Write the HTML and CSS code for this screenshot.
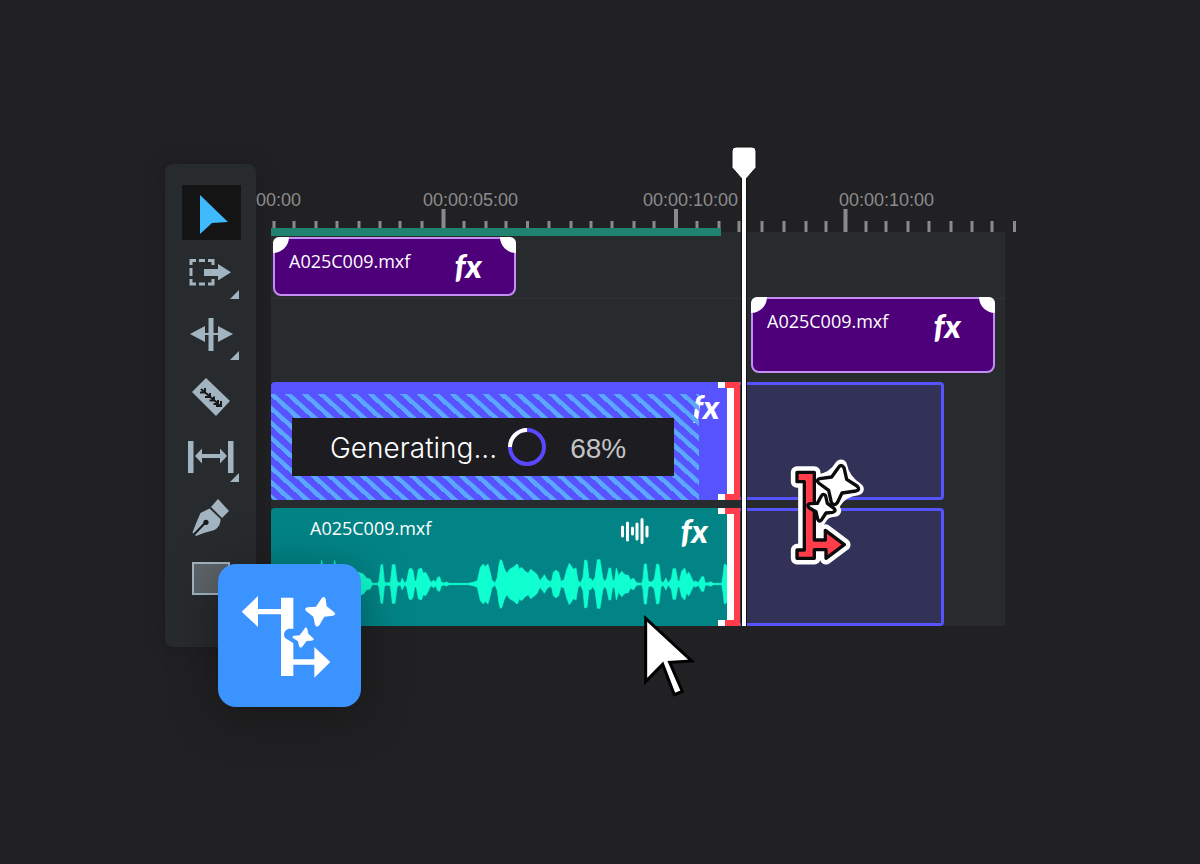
FILE: index.html
```html
<!DOCTYPE html>
<html lang="en">
<head>
    <meta charset="UTF-8" />
    <meta name="viewport" content="width=device-width, initial-scale=1.0" />
    <title>Generative Extend</title>
    <link rel="stylesheet" href="styles.css">
</head>
<body>
<main class="editor">
    <div class="toolbar">
        <button class="tool active" type="button" aria-label="Selection">
            <svg viewBox="0 0 59 55"><path class="pointer" d="M18 10L46 37L30 38L18 49Z"/></svg>
        </button>
        <button class="tool" type="button" aria-label="Track select forward">
            <svg viewBox="0 0 59 61">
                <path class="line" d="M9 23V18.500H14M17 18.500H23M26 18.500H31V23M9 26V34M9 37V42H14M17 42H23M26 42H31V37"/>
                <path class="cut" d="M22 27H36V22L49 30.300L36 38.500V34H22Z"/>
                <path class="more" d="M57 48V57H48Z"/>
            </svg>
        </button>
        <button class="tool" type="button" aria-label="Ripple edit">
            <svg viewBox="0 0 59 61">
                <path d="M8 31L23 23V30H36V23L51 31L36 39V32H23V39Z"/>
                <path d="M26.500 15H31.500V48H26.500Z"/>
                <path class="more" d="M57 48V57H48Z"/>
            </svg>
        </button>
        <button class="tool" type="button" aria-label="Razor">
            <svg viewBox="0 0 59 61">
                <path d="M24 14L48 37L34 52L10 28Z"/>
                <path class="slot" d="M19 25L39 42M23 24V28.500H18M28 29V33H23M32 32.500V36.500H27.500M36 36V40H31.500M39 37V42H34"/>
            </svg>
        </button>
        <button class="tool" type="button" aria-label="Slip">
            <svg viewBox="0 0 59 61">
                <path d="M6 16H11.500V48H6ZM46 16H51.500V48H46Z"/>
                <path d="M13 31L20 23.500V29H38V23.500L45 31L38 38.500V33H20V38.500Z"/>
                <path class="more" d="M57 48V57H48Z"/>
            </svg>
        </button>
        <button class="tool" type="button" aria-label="Pen">
            <svg viewBox="0 0 59 61">
                <path d="M36 13L47 25L40 32L29 21Z"/>
                <path d="M27.500 22.500L38.500 33Q39 40 32.500 44Q24 46 14 50L10.500 46.500Q14 37 18.500 27Z"/>
                <path class="slit" d="M12 48.500L23 37"/>
                <circle class="hole" cx="24" cy="36.300" r="2.600"/>
            </svg>
        </button>
        <button class="tool" type="button" aria-label="Rectangle">
            <svg viewBox="0 0 59 61"><path class="box" d="M11 16H47V47H11Z"/></svg>
        </button>
    </div>

    <section class="timeline">
        <div class="ruler">
            <div class="times">
                <span>00:00</span>
                <span>00:00:05:00</span>
                <span>00:00:10:00</span>
                <span>00:00:10:00</span>
            </div>
            <svg class="ticks" viewBox="0 0 760 23" preserveAspectRatio="none">
                <path d="M18 12V23M38 12V23M60 12V23M81 12V23M103 12V23M124 12V23M144 12V23M166 12V23M208 12V23M230 12V23M250 12V23M271.500 12V23M293 12V23M315 12V23M335 12V23M356 12V23M378 12V23M398 12V23M441 12V23M463 12V23M483 12V23M506 12V23M528 12V23M550 12V23M570 12V23M610 12V23M630 12V23M652 12V23M673 12V23M695 12V23M716 12V23M736 12V23M758.500 12V23"/>
                <path class="major" d="M187.500 0V23M420 0V23M589.500 0V23"/>
            </svg>
        </div>

        <div class="tracks">
            <div class="render-bar"></div>
            <div class="track track-v3">
                <div class="clip title-clip">
                    <span class="name">A025C009.mxf</span>
                    <span class="fx">fx</span>
                </div>
            </div>
            <div class="track track-v2">
                <div class="clip title-clip">
                    <span class="name">A025C009.mxf</span>
                    <span class="fx">fx</span>
                </div>
            </div>
            <div class="track track-v1">
                <div class="clip video-clip">
                    <div class="stripes">
                        <div class="progress" role="status">
                            <span class="label">Generating...</span>
                            <svg class="ring" viewBox="0 0 38 38">
                                <circle cx="19" cy="19" r="17"/>
                                <path d="M2 19A17 17 0 0 1 19 2"/>
                            </svg>
                            <span class="percent">68%</span>
                        </div>
                    </div>
                    <span class="fx">fx</span>
                    <svg class="bracket" viewBox="0 0 22 118" preserveAspectRatio="none">
                        <path class="inner" d="M0 0H8V6H16V112H8V118H0V112H9V6H0Z"/>
                        <path class="outer" d="M7 0H22V118H7V112H16V6H7Z"/>
                    </svg>
                </div>
                <div class="extension"></div>
            </div>
            <div class="track track-a1">
                <div class="clip audio-clip">
                    <div class="audio-body">
                        <div class="audio-head">
                            <span class="name">A025C009.mxf</span>
                            <svg class="audio-icon" viewBox="0 0 28 26"><path d="M1.500 9V18M6.500 5V22M11.500 10V16M16 6V21M21 1.500V24.500M26 9V18"/></svg>
                            <span class="fx">fx</span>
                        </div>
                        <svg class="wave" viewBox="0 0 1371 150" preserveAspectRatio="none"><path id="wave"/></svg>
                    </div>
                    <svg class="bracket" viewBox="0 0 22 118" preserveAspectRatio="none">
                        <path class="inner" d="M0 0H8V6H16V112H8V118H0V112H9V6H0Z"/>
                        <path class="outer" d="M7 0H22V118H7V112H16V6H7Z"/>
                    </svg>
                </div>
                <div class="extension"></div>
            </div>
        </div>

        <div class="playhead">
            <svg viewBox="0 0 28 34"><path d="M6 1H22Q26 1 26 5V21.500L16 33H12L2 21.500V5Q2 1 6 1Z"/></svg>
            <div class="playhead-line"></div>
        </div>

        <!-- extend tool, shown while dragging -->
        <svg class="extend-cursor" viewBox="0 0 330 375">
            <g class="halo">
                <path d="M81 67H133V270H166V241L223 284L168 325V299H133V325H81V300H103V95H81Z"/>
                <path d="M213 47Q220 88 263 117Q214 122 192 162Q183 116 143 92Q190 87 213 47Z"/>
                <path d="M160 135Q167 165 195 182Q162 182 148 212Q143 182 115 168Q149 165 160 135Z"/>
            </g>
            <path class="stem" d="M81 67H133V270H166V241L223 284L168 325V299H133V325H81V300H103V95H81Z"/>
            <path class="spark" d="M205 53Q213 40 222 53L230 88L261 108Q272 119 258 123L216 129L202 158Q192 170 184 157L176 121L146 99Q137 89 150 86L185 81Z"/>
            <path class="spark" d="M154 138Q160 128 167 138L172 160L192 175Q200 184 188 187L168 189L155 209Q148 219 143 207L138 185L118 174Q108 165 120 161L142 160Z"/>
        </svg>

        <svg class="cursor" viewBox="0 0 300 330">
            <path d="M77 55L215 183L149 187L187 274L163 284L128 193L77 245Z"/>
        </svg>
    </section>

    <div class="badge">
        <svg viewBox="54 42 429 429">
            <path d="M125 185L174 138V177H243V143H280V328H343V291L391 336L343 383V344H280V378H243V193H174V231Z"/>
            <path class="gap" d="M285 236H266Q252 240 252 254Q252 264 264 269L290 286Z"/>
            <path d="M313 237Q318 226 322 237L325 251L339 264Q346 270 334 272L320 273L308 289Q302 298 297 288L294 274L280 265Q273 259 283 257L299 256Z"/>
            <path d="M365 145Q373 136 377 147L380 169L402 186Q410 194 399 197L373 200L358 226Q350 235 345 224L340 200L318 183Q311 174 323 172L348 170Z"/>
        </svg>
    </div>
</main>

<script>
    // half heights of the waveform, as x, height pairs
    const parts = [
        { offset: -18, peaks: [
            18,2, 60,3, 90,20, 110,8, 140,6, 160,10, 170,71, 180,20, 200,15, 209,71, 218,20, 240,40, 262,24,
            280,35, 295,30, 305,17, 315,15, 322,2, 338,2, 342,10, 348,58, 353,58, 358,10, 362,3, 376,5, 382,58, 390,58,
            396,10, 402,3, 407,5, 412,18, 418,3, 425,8, 432,44, 438,48, 444,40, 449,8, 454,10, 460,44, 469,48,
            475,32, 482,35, 488,25, 495,10, 500,5, 505,12, 512,5, 518,20, 524,22, 528,7, 535,3, 545,6, 552,2,
            610,2, 625,5, 637,10, 646,50, 655,60, 660,52, 669,60, 677,30, 681,10, 685,8, 690,3, 697,20
        ] },
        { offset: 657, peaks: [
            27,58, 31,73, 36,70, 42,48, 50,32, 60,45, 70,50, 76,56, 82,60, 88,45, 95,50, 105,38, 115,32, 122,44,
            130,38, 140,30, 150,10, 158,20, 163,28, 170,15, 178,8, 185,10, 190,35, 198,42, 206,35, 213,8, 222,12,
            230,42, 238,62, 243,55, 250,44, 258,48, 264,10, 272,4, 279,20, 284,72, 291,70, 297,15, 301,18, 308,8, 315,20,
            322,73, 330,73, 338,20, 342,8, 350,15, 357,48, 362,48, 368,10, 374,12, 379,48, 386,25, 395,38, 405,28,
            415,26, 422,12, 430,18, 440,4, 455,2, 459,15, 463,60, 469,60, 475,8, 485,6, 493,15, 500,60, 507,58,
            513,8, 520,4, 528,18, 534,3, 544,15, 549,46, 557,46, 563,10, 568,8, 575,38, 584,48, 590,28, 597,35,
            606,15, 612,5, 618,10, 624,3, 630,12, 635,22, 641,22, 646,3, 655,4, 662,7, 670,2, 695,2, 699,25,
            703,60, 710,56, 714,30
        ] }
    ];
    const upper = [];
    const lower = [];
    parts.forEach(({ offset, peaks }) => {
        for (let i = 0; i < peaks.length; i += 2) {
            const x = peaks[i] + offset;
            upper.push(`${x} ${75 - peaks[i + 1]}`);
            lower.unshift(`${x} ${75 + peaks[i + 1]}`);
        }
    });
    document.getElementById('wave').setAttribute('d', `M${upper.concat(lower).join('L')}Z`);
</script>
</body>
</html>
```

FILE: styles.css
```css
:root {
    --page: #212123;
    --panel: #282b2e;
    --icon: #a3b4c1;
    --violet: #5753ff;
    --teal: #028486;
    --red: #ff3d4b;
}

* {
    box-sizing: border-box;
    margin: 0;
    padding: 0;
}

body {
    min-height: 100vh;
    background: var(--page);
    color: white;
    font-family: "Open Sans", "Noto Sans", sans-serif;
}

svg {
    display: block;
}

.editor {
    position: relative;
    display: flex;
    align-items: flex-start;
    padding: 164px 184px 40px 165px;
}

/* toolbar */

.toolbar {
    display: flex;
    flex-direction: column;
    align-items: center;
    width: 91px;
    flex: none;
    padding: 21px 15px 39px 17px;
    background: var(--panel);
    border-radius: 8px;
    box-shadow: 0 0 24px rgba(0, 0, 0, 0.15);
}

.tool {
    width: 59px;
    height: 61px;
    border: none;
    background: none;
    cursor: pointer;
}

.tool.active {
    height: 55px;
    margin-bottom: 2px;
    background: #141414;
}

.tool svg {
    width: 100%;
    height: 100%;
    fill: var(--icon);
}

.tool .pointer {
    fill: #3fbbfd;
}

.tool .line {
    fill: none;
    stroke: var(--icon);
    stroke-width: 3;
}

.tool .cut {
    stroke: var(--panel);
    stroke-width: 2;
    paint-order: stroke;
}

.tool .slot,
.tool .slit {
    fill: none;
    stroke: #17191b;
    stroke-width: 2;
}

.tool .hole {
    fill: #17191b;
}

.tool .box {
    fill: #5d6468;
    stroke: var(--icon);
    stroke-width: 2;
}

/* timeline */

.timeline {
    position: relative;
    flex: 1;
    min-width: 0;
}

.ruler {
    height: 68px;
    padding-top: 26px;
}

.times {
    display: grid;
    grid-template-columns: 167fr 220fr 196fr 177fr;
    height: 19px;
    font-family: "Liberation Sans", Arial, sans-serif;
    font-size: 18px;
    line-height: 20px;
    color: #8b8b8d;
}

.ticks {
    width: 100%;
    height: 23px;
    stroke: #8a8a8c;
    stroke-width: 3;
}

.ticks .major {
    stroke-width: 4;
}

.tracks {
    display: flow-root;
    margin: 0 11px 0 15px;
    background: var(--panel);
}

.render-bar {
    position: relative;
    width: 61.300%;
    height: 8px;
    margin-top: -4px;
    background: #1f836f;
}

.track {
    display: grid;
}

.track-v3 {
    grid-template-columns: 2fr 243fr 489fr;
    height: 62px;
    margin-top: 1px;
    padding-bottom: 2px;
    border-bottom: 1px solid #303437;
}

.track-v3 .clip,
.track-v2 .clip {
    grid-column: 2;
}

.track-v2 {
    grid-template-columns: 480fr 244fr 10fr;
    height: 76px;
    margin-top: -2px;
    margin-bottom: 9px;
}

.track-v1,
.track-a1 {
    grid-template-columns: 469fr 204fr 61fr;
    height: 118px;
}

.track-v1 {
    margin-bottom: 8px;
}

.clip {
    display: flex;
    min-width: 0;
}

.name {
    font-size: 18px;
    line-height: 24px;
}

.fx {
    font-family: Lato, sans-serif;
    font-size: 33px;
    font-weight: 900;
    font-style: italic;
    line-height: 32px;
}

.title-clip {
    position: relative;
    justify-content: space-between;
    align-items: flex-start;
    padding: 10px 32px 0 14px;
    background: #4e007b;
    border: 2px solid #c48ff5;
    border-radius: 8px;
}

/* trim handles in the corners */
.title-clip::before,
.title-clip::after {
    content: '';
    position: absolute;
    top: -2px;
    width: 16px;
    height: 16px;
    background: white;
}

.title-clip::before {
    left: -2px;
    border-radius: 6px 0 16px 0;
}

.title-clip::after {
    right: -2px;
    border-radius: 0 6px 0 16px;
}

.video-clip {
    background: var(--violet);
    border-radius: 4px 0 0 4px;
}

.video-clip .fx {
    width: 26px;
    margin: 8px 0 0 -7px;
}

.stripes {
    position: relative;
    z-index: 1;
    flex: 1;
    margin-top: 12px;
    padding: 24px 25px 24px 21px;
    background: repeating-linear-gradient(42deg, #5aa7fb 0 4px, transparent 5px 11px);
    border-radius: 0 0 0 4px;
}

.progress {
    display: flex;
    align-items: center;
    height: 58px;
    padding-left: 38px;
    background: #1d1c21;
}

.label {
    padding-top: 2px;
    font-family: Inter, sans-serif;
    font-size: 28px;
    font-weight: 300;
}

.ring {
    width: 38px;
    height: 38px;
    margin: 0 24px 0 11px;
    fill: none;
    stroke: #5a48ff;
    stroke-width: 4;
}

.ring path {
    stroke: white;
}

.percent {
    padding-top: 4px;
    font-family: "Liberation Sans", Arial, sans-serif;
    font-size: 28px;
    color: #c4c4c6;
}

.bracket {
    flex: none;
    width: 22px;
    height: 118px;
}

.bracket .inner {
    fill: white;
}

.bracket .outer {
    fill: var(--red);
}

.extension {
    background: #323158;
    border: 3px solid var(--violet);
    border-left: none;
    border-radius: 0 4px 4px 0;
}

.audio-clip {
    background: var(--teal);
    border-radius: 4px 0 0 4px;
}

.audio-clip .bracket {
    margin-left: -10px;
}

.audio-body {
    flex: 1;
    min-width: 0;
}

.audio-head {
    display: flex;
    align-items: flex-start;
    height: 51px;
    padding: 8px 20px 0 39px;
}

.audio-head .fx {
    line-height: 28px;
}

.audio-icon {
    width: 28px;
    height: 26px;
    margin: 2px 32px 0 auto;
    fill: none;
    stroke: white;
    stroke-width: 3;
    stroke-linecap: round;
}

.wave {
    width: 100%;
    height: 50px;
    fill: #0fffd0;
    stroke: #0fffd0;
    stroke-width: 2;
    stroke-linejoin: round;
}

/* things that float above the tracks */

.playhead {
    position: absolute;
    top: -18px;
    bottom: 0;
    left: 64.200%;
    z-index: 3;
    display: flex;
    flex-direction: column;
    align-items: center;
    width: 28px;
    margin-left: -14px;
}

.playhead svg {
    width: 28px;
    height: 34px;
    fill: white;
    stroke: #131314;
    stroke-width: 1;
}

.playhead-line {
    flex: 1;
    width: 6px;
    margin-top: -2px;
    background: white;
    border: solid #131314;
    border-width: 0 1px;
}

.extend-cursor {
    position: absolute;
    top: 286px;
    left: 67.600%;
    z-index: 4;
    width: 110px;
    height: 125px;
    stroke: #0b0b0d;
    stroke-width: 10;
    stroke-linejoin: round;
}

.extend-cursor .halo {
    fill: white;
    stroke: white;
    stroke-width: 37;
}

.extend-cursor .stem {
    fill: var(--red);
}

.extend-cursor .spark {
    fill: white;
}

.cursor {
    position: absolute;
    top: 436px;
    left: 47.900%;
    z-index: 4;
    width: 100px;
    height: 110px;
    fill: white;
    stroke: black;
    stroke-width: 9;
}

.badge {
    position: absolute;
    top: 564px;
    left: 218px;
    z-index: 5;
    width: 143px;
    height: 143px;
    background: #3a93ff;
    border-radius: 18px;
    box-shadow: 0 8px 50px rgba(0, 0, 0, 0.35);
}

.badge svg {
    width: 100%;
    fill: white;
}

.badge .gap {
    fill: #3a93ff;
}
```
